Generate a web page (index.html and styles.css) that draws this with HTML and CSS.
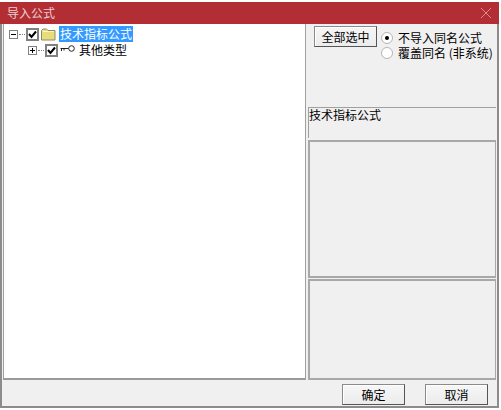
FILE: index.html
```html
<!DOCTYPE html>
<html lang="zh">
<head>
<meta charset="utf-8">
<title>导入公式</title>
<link rel="stylesheet" href="styles.css">
</head>
<body>
<div class="window">
  <header class="titlebar">
    <span class="title">导入公式</span>
    <svg class="close" width="12" height="12" viewBox="0 0 12 12"><path d="M1 1L11 11M11 1L1 11" stroke="#d98a8d" stroke-width="1" fill="none"/></svg>
  </header>
  <div class="content">
    <main class="tree">
      <div class="row row-root">
        <span class="expander"><svg width="9" height="9" viewBox="0 0 9 9"><rect x=".5" y=".5" width="8" height="8" fill="#fff" stroke="#808080"/><path d="M2 4.5H7" stroke="#000"/></svg></span>
        <span class="dots"></span>
        <span class="check"><svg width="9" height="9" viewBox="0 0 9 9"><path d="M1 4L3.5 7L8 1.5" stroke="#000" stroke-width="2" fill="none"/></svg></span>
        <svg class="icon" width="15" height="13" viewBox="0 0 15 13"><path d="M.5 12V2.5L2 1H5.5L7 2.5H14V12Z" fill="#e9dc7c" stroke="#8f8a62"/><path d="M1.5 3.5H13" stroke="#fbf6c0"/></svg>
        <span class="label selected">技术指标公式</span>
      </div>
      <div class="row row-child">
        <span class="expander"><svg width="9" height="9" viewBox="0 0 9 9"><rect x=".5" y=".5" width="8" height="8" fill="#fff" stroke="#808080"/><path d="M2 4.5H7M4.5 2V7" stroke="#000"/></svg></span>
        <span class="dots"></span>
        <span class="check"><svg width="9" height="9" viewBox="0 0 9 9"><path d="M1 4L3.5 7L8 1.5" stroke="#000" stroke-width="2" fill="none"/></svg></span>
        <svg class="icon icon-key" width="15" height="9" viewBox="0 0 15 9"><circle cx="11.5" cy="3.5" r="2.8" fill="#fff" stroke="#222"/><path d="M.5 3.5H8.5M1.5 3.5V6M4 3.5V5.5" stroke="#222" fill="none"/></svg>
        <span class="label">其他类型</span>
      </div>
    </main>
    <aside class="side">
      <div class="options">
        <button class="btn btn-all" type="button">全部选中</button>
        <div class="radios">
          <div class="radio-row"><span class="radio on"></span><span>不导入同名公式</span></div>
          <div class="radio-row"><span class="radio"></span><span>覆盖同名 (非系统)</span></div>
        </div>
      </div>
      <div class="caption">技术指标公式</div>
      <div class="box box-a"></div>
      <div class="box box-b"></div>
    </aside>
  </div>
  <footer class="footer">
    <button class="btn btn-foot" type="button">确定</button>
    <button class="btn btn-foot" type="button">取消</button>
  </footer>
</div>
</body>
</html>
```
FILE: styles.css
```css
* { box-sizing: border-box; }
html, body { margin: 0; height: 100%; background: #fff; }
body { padding-top: 2px; font-family: "Noto Sans CJK SC", "Liberation Sans", sans-serif; font-size: 12px; color: #000; overflow: hidden; }
.window {
  width: 499px; height: 406px;
  display: flex; flex-direction: column;
  background: #f0f0f0;
  border-left: 2px solid #8c8c8c;
  border-right: 2px solid #8c8c8c;
  border-bottom: 2px solid #8c8c8c;
}
.titlebar {
  height: 22px; margin: 0 -2px; padding: 0 6px 0 7px;
  flex: none;
  display: flex; align-items: center; justify-content: space-between;
  background: #b22e34; color: #e9d0d1;
}
.title { font-size: 12px; line-height: 22px; }
.close { margin-right: 1px; }
.content { flex: none; height: 356px; display: flex; padding-left: 1px; }
.tree {
  width: 303px; height: 356px; flex: none;
  background: #fff;
  border-right: 1px solid #a0a0a0;
  border-bottom: 2px solid #9a9a9a;
  border-left: 1px solid #a0a0a0;
  padding: 2px 0 0 5px;
}
.row { display: flex; align-items: center; height: 16px; }
.row-child { margin-left: 19px; }
.expander { width: 9px; height: 9px; display: flex; }
.expander svg { display: block; }
.dots { width: 6px; margin: 0 0 0 1px; border-top: 1px dotted #808080; }
.check {
  width: 13px; height: 13px; margin-left: 1px;
  border: 2px solid #808080; background: #fff;
  display: flex; align-items: center; justify-content: center;
}
.icon { margin-left: 2px; }
.icon-key { margin-top: -1px; }
.label { margin-left: 3px; padding: 0 1px; font-size: 12px; line-height: 16px; }
.selected { background: #3399ff; color: #fff; }
.side {
  flex: 1; min-width: 0; padding: 0 1px 0 2px;
  display: flex; flex-direction: column;
}
.options { height: 83px; display: flex; align-items: flex-start; padding: 2px 0 0 6px; }
.btn {
  background: linear-gradient(#f6f6f6, #ececec); font: inherit; color: #000; padding: 0;
  border: 1px solid #8a8a8a; border-right-color: #555; border-bottom-color: #555;
  box-shadow: inset 1px 1px 0 #fff;
}
.btn-all { width: 63px; height: 21px; flex: none; }
.radios { margin-left: 4px; padding-top: 4px; }
.radio-row { display: flex; align-items: center; height: 15px; line-height: 15px; gap: 5px; white-space: nowrap; }
.radio {
  width: 12px; height: 12px; border-radius: 50%; flex: none;
  background: #fff; border: 1px solid #b4b4b4;
  display: flex; align-items: center; justify-content: center;
}
.radio.on::after { content: ""; width: 4px; height: 4px; border-radius: 50%; background: #000; }
.caption {
  height: 31px; margin-bottom: 2px; flex: none;
  border-top: 1px solid #a0a0a0; border-left: 1px solid #a0a0a0;
  line-height: 14px;
}
.box { border: 2px solid #a8a8a8; border-right-width: 1px; background: #f0f0f0; flex: none; }
.box-a { height: 138px; }
.box-b { height: 101px; margin-top: 1px; }
.footer { flex: 1; display: flex; justify-content: flex-end; gap: 20px; padding: 4px 9px 0 0; }
.btn-foot { width: 63px; height: 21px; }
```
